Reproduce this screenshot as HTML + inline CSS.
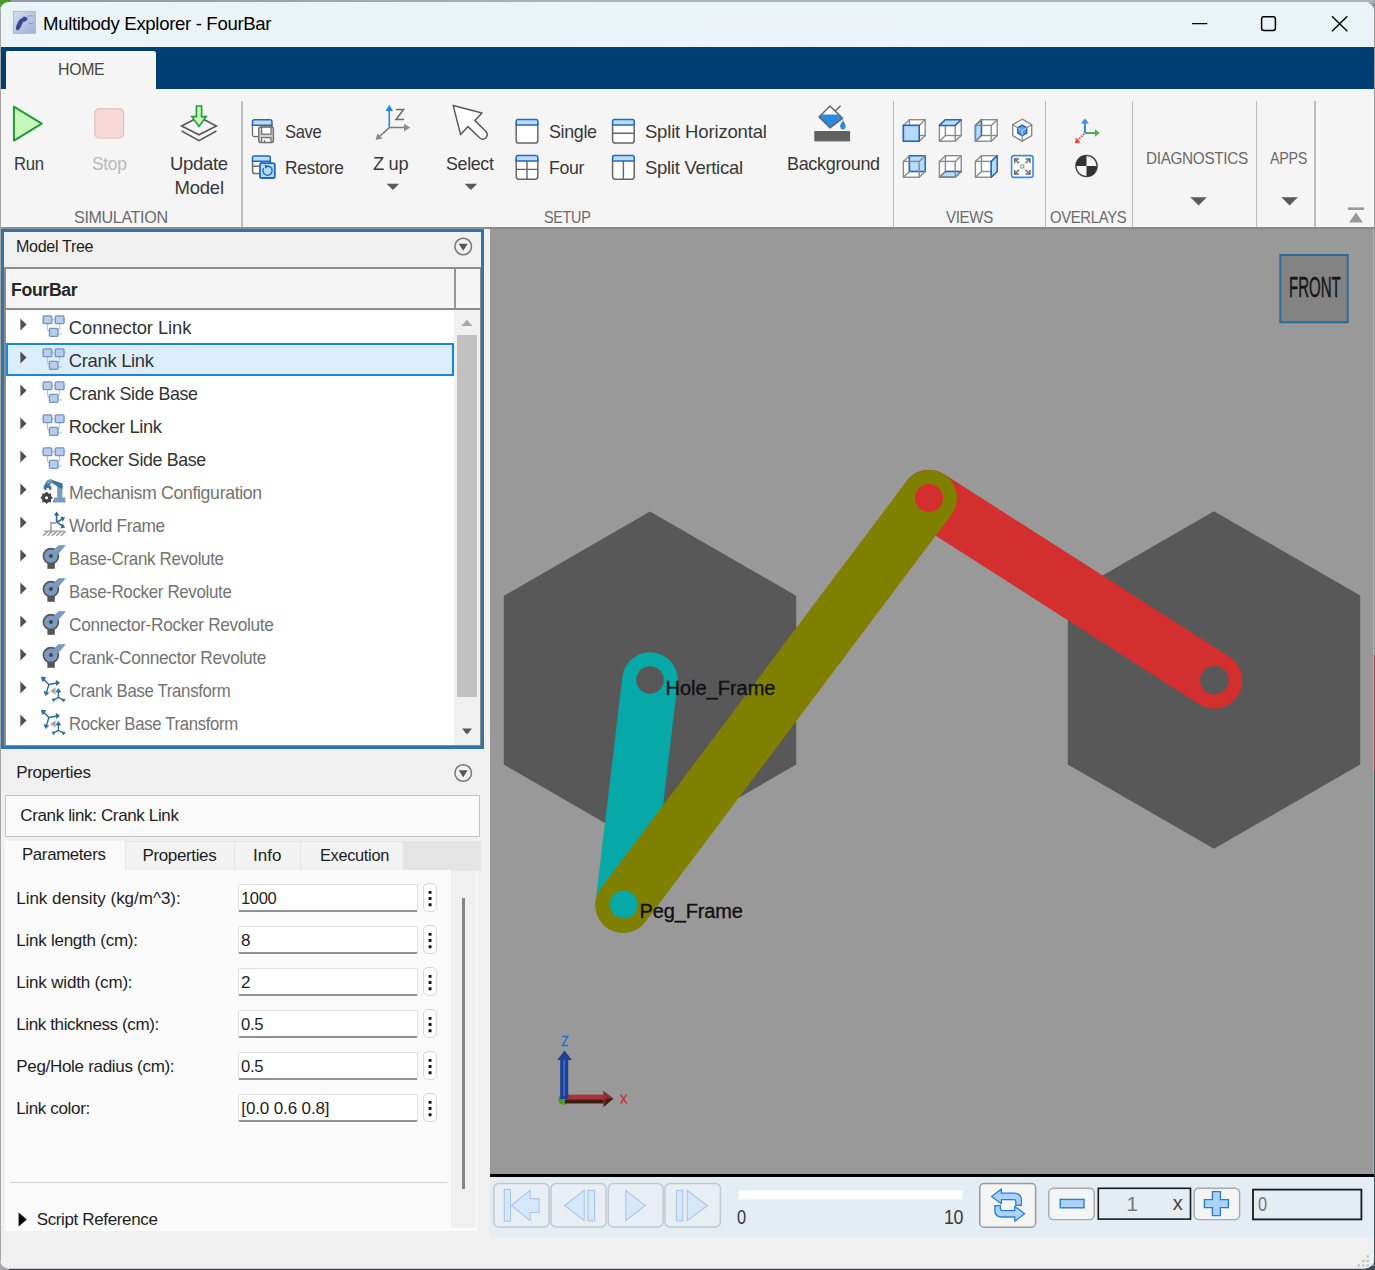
<!DOCTYPE html>
<html><head><meta charset="utf-8"><title>Multibody Explorer - FourBar</title><style>
html,body{margin:0;padding:0}
body{width:1375px;height:1270px;overflow:hidden;position:relative;background:#8b98a3;font-family:"Liberation Sans",sans-serif}
div{position:absolute}
#win{left:0;top:0;width:1375px;height:1270px;clip-path:inset(2px 1px 1.6px 0px round 9px);background:#f0f0f0}
svg{position:absolute;left:0;top:0}
.t{position:absolute;white-space:pre;line-height:1;margin:0}
#front{position:absolute;left:1289.4px;top:272.8px;font-size:29px;line-height:1;color:#161616;-webkit-text-stroke:0.5px #161616;transform-origin:0 0;transform:scaleX(0.517);white-space:pre}

</style></head><body>
<div style="left:0px;top:0px;width:1375px;height:3px;background:linear-gradient(90deg,#8d9aa5 0,#9ba3a9 20%,#b3b3b3 45%,#b3b3b3 100%)"></div>
<div style="left:0px;top:0px;width:11px;height:13px;background:#4b992d"></div>
<div style="left:0px;top:1266px;width:1375px;height:4px;background:#3c484c"></div>
<div style="left:0px;top:1255px;width:9px;height:15px;background:#a8a8a8"></div>
<div style="left:1374px;top:0px;width:1px;height:655px;background:#9a9a9a"></div>
<div style="left:1374px;top:655px;width:1px;height:115px;background:#b04048"></div>
<div style="left:1374px;top:770px;width:1px;height:500px;background:#45575a"></div>
<div id="win">
<div style="left:0px;top:0px;width:1375px;height:47px;background:radial-gradient(ellipse 260px 40px at 800px 44px,#edf2fb 0,#eaf4f7 100%)"></div>
<div style="left:0px;top:47px;width:1375px;height:42px;background:#003f73"></div>
<div style="left:5.4px;top:51.2px;width:150.3px;height:38.8px;background:#f5f5f5;border-radius:2.5px 2.5px 0 0"></div>
<div style="left:0px;top:89px;width:1375px;height:138px;background:#f5f5f5"></div>
<div style="left:0px;top:47px;width:5.5px;height:42px;background:#003f73"></div>
<div style="left:0px;top:227px;width:1375px;height:2px;background:#8c8c8c"></div>
<div style="left:241.3px;top:101px;width:1.3px;height:126px;background:#bdbdbd"></div>
<div style="left:892.8px;top:101px;width:1.3px;height:126px;background:#bdbdbd"></div>
<div style="left:1044.5px;top:101px;width:1.3px;height:126px;background:#bdbdbd"></div>
<div style="left:1131.6px;top:101px;width:1.3px;height:126px;background:#bdbdbd"></div>
<div style="left:1255.8px;top:101px;width:1.3px;height:126px;background:#bdbdbd"></div>
<div style="left:1314.4px;top:101px;width:1.3px;height:126px;background:#bdbdbd"></div>
<div style="left:0px;top:229px;width:1375px;height:1041px;background:#f0f0f0"></div>
<div style="left:1.1px;top:228.6px;width:482.9px;height:520.6px;background:#2e74ad"></div>
<div style="left:4.1px;top:231.6px;width:476.9px;height:35.8px;background:#f0f0f0"></div>
<div style="left:4.1px;top:267.4px;width:476.9px;height:478.6px;background:#8c8c8c"></div>
<div style="left:5.5px;top:269.2px;width:474.5px;height:39.3px;background:#f5f5f5"></div>
<div style="left:454.3px;top:269.2px;width:1.5px;height:39.3px;background:#999"></div>
<div style="left:5.5px;top:310px;width:448.7px;height:434.6px;background:#fff"></div>
<div style="left:454.2px;top:310px;width:25.8px;height:434.6px;background:#f0f0f0"></div>
<div style="left:457.4px;top:335.4px;width:19.4px;height:361.5px;background:#c1c1c1"></div>
<div style="left:6.3px;top:342.6px;width:447.6px;height:33.1px;background:#dceefe;border:2.8px solid #1c84dc;box-sizing:border-box"></div>
<div style="left:4.6px;top:795.3px;width:475.8px;height:41.5px;background:#fafafa;border:1.5px solid #c2c2c2;box-sizing:border-box"></div>
<div style="left:4.6px;top:841px;width:476.4px;height:30px;background:#e4e4e4"></div>
<div style="left:4.6px;top:870px;width:446.4px;height:361px;background:#fafafa"></div>
<div style="left:451px;top:871px;width:25.5px;height:356.5px;background:#f0f0f0"></div>
<div style="left:476px;top:871px;width:1.3px;height:360px;background:#fcfcfc"></div>
<div style="left:4.6px;top:1227.6px;width:472.7px;height:3.4px;background:#fcfcfc"></div>
<div style="left:4.6px;top:841px;width:120.8px;height:31px;background:#fafafa"></div>
<div style="left:126.4px;top:842px;width:107.2px;height:28px;background:#f2f2f2"></div>
<div style="left:234.6px;top:842px;width:65.4px;height:28px;background:#f2f2f2"></div>
<div style="left:301px;top:842px;width:102.4px;height:28px;background:#f2f2f2"></div>
<div style="left:461.9px;top:898px;width:3.0px;height:291px;background:#858585"></div>
<div style="left:10px;top:1182px;width:436.5px;height:1.3px;background:#d2d2d2"></div>
<div style="left:237.7px;top:883.6px;width:180.3px;height:28.6px;background:#fff;border:1px solid #e0e0e0;border-bottom:2px solid #909090;border-radius:2px;box-sizing:border-box"></div>
<div style="left:423.1px;top:883.2px;width:13.9px;height:29.2px;background:#fdfdfd;border:1px solid #d8d8d8;border-radius:5px;box-sizing:border-box"></div>
<div style="left:237.7px;top:925.6px;width:180.3px;height:28.6px;background:#fff;border:1px solid #e0e0e0;border-bottom:2px solid #909090;border-radius:2px;box-sizing:border-box"></div>
<div style="left:423.1px;top:925.2px;width:13.9px;height:29.2px;background:#fdfdfd;border:1px solid #d8d8d8;border-radius:5px;box-sizing:border-box"></div>
<div style="left:237.7px;top:967.6px;width:180.3px;height:28.6px;background:#fff;border:1px solid #e0e0e0;border-bottom:2px solid #909090;border-radius:2px;box-sizing:border-box"></div>
<div style="left:423.1px;top:967.2px;width:13.9px;height:29.2px;background:#fdfdfd;border:1px solid #d8d8d8;border-radius:5px;box-sizing:border-box"></div>
<div style="left:237.7px;top:1009.6px;width:180.3px;height:28.6px;background:#fff;border:1px solid #e0e0e0;border-bottom:2px solid #909090;border-radius:2px;box-sizing:border-box"></div>
<div style="left:423.1px;top:1009.2px;width:13.9px;height:29.2px;background:#fdfdfd;border:1px solid #d8d8d8;border-radius:5px;box-sizing:border-box"></div>
<div style="left:237.7px;top:1051.6px;width:180.3px;height:28.6px;background:#fff;border:1px solid #e0e0e0;border-bottom:2px solid #909090;border-radius:2px;box-sizing:border-box"></div>
<div style="left:423.1px;top:1051.1999999999998px;width:13.9px;height:29.2px;background:#fdfdfd;border:1px solid #d8d8d8;border-radius:5px;box-sizing:border-box"></div>
<div style="left:237.7px;top:1093.6px;width:180.3px;height:28.6px;background:#fff;border:1px solid #e0e0e0;border-bottom:2px solid #909090;border-radius:2px;box-sizing:border-box"></div>
<div style="left:423.1px;top:1093.1999999999998px;width:13.9px;height:29.2px;background:#fdfdfd;border:1px solid #d8d8d8;border-radius:5px;box-sizing:border-box"></div>
<div style="left:490.3px;top:229px;width:884.7px;height:945px;background:#999999"></div>
<div style="left:490.3px;top:227px;width:884.7px;height:2px;background:#8a8a8a"></div>
<div style="left:490.3px;top:1174px;width:884.7px;height:2.6px;background:#000"></div>
<div style="left:490.3px;top:1176.6px;width:884.7px;height:60.0px;background:#e4ecf4"></div>
<div style="left:1372.8px;top:229px;width:1.2px;height:945px;background:#b0b0b0"></div>
<div style="left:0px;top:0px;width:1px;height:1270px;background:#a6a6a6"></div>
<svg width="1375" height="1270" viewBox="0 0 1375 1270">
<defs><linearGradient id="ig" x1="0" y1="0" x2="1" y2="1"><stop offset="0" stop-color="#d4dcee"/><stop offset="1" stop-color="#9fb1d6"/></linearGradient></defs>
<rect x="13.3" y="11.3" width="22" height="22" fill="url(#ig)" stroke="#a9adb9" stroke-width="0.8"/>
<path d="M16 29.5 Q15.5 26 18 22 Q19.5 19 22 18 L24 16.5 L27 17.5 L27.5 19.5 L25 21.5 L23 22 Q21.5 26 19.5 29 Q18 31 16 29.5Z" fill="#3b4891"/>
<path d="M27.5 17.5 L29 15.8 L33 15.8 M28 22.5 L29 23.5 L33 23.5" fill="none" stroke="#7d8db8" stroke-width="0.8"/>
<path d="M1192 23.6 H1207.3" stroke="#000" stroke-width="1.4" fill="none"/>
<rect x="1261.6" y="16.7" width="13.8" height="13.8" rx="2.2" fill="none" stroke="#000" stroke-width="1.5"/>
<path d="M1332 16.2 L1347.3 31.2 M1347.3 16.2 L1332 31.2" stroke="#000" stroke-width="1.4" fill="none"/>
<path d="M13.9 106.7 V140.6 L41.8 123.6 Z" fill="#c7f8ba" stroke="#1f9b37" stroke-width="2" stroke-linejoin="round"/>
<rect x="94.8" y="108.8" width="28.8" height="29.2" rx="4.5" fill="#f9d8d8" stroke="#e0bdb8" stroke-width="1.2"/>
<path d="M181.6 131 L199 140.6 L216.4 131" fill="none" stroke="#5a5a5a" stroke-width="1.6" stroke-linejoin="miter"/>
<path d="M181.6 126 L199 117 L216.4 126 L199 134.8 Z" fill="#f5f5f5" stroke="#5a5a5a" stroke-width="1.6" stroke-linejoin="miter"/>
<path d="M196.4 106 H201.6 V116.6 H206.2 L199 126.4 L191.8 116.6 H196.4 Z" fill="#c7f8ba" stroke="#1f9b37" stroke-width="1.6" stroke-linejoin="miter"/>
<path d="M252.6 124 V135 Q252.6 136.4 254 136.4 H259 M271.8 124 V127" fill="none" stroke="#6b6b6b" stroke-width="1.5"/>
<rect x="253.3" y="124.6" width="17.8" height="11" fill="#fff"/>
<path d="M252.5 125.2 V121.6 Q252.5 119.8 254.3 119.8 H270.1 Q271.9 119.8 271.9 121.6 V125.2 Z" fill="#b9defd" stroke="#2566c0" stroke-width="1.5"/>
<rect x="258.8" y="127" width="14.6" height="15.4" rx="1.8" fill="#d4d4d4" stroke="#727272" stroke-width="1.5"/>
<rect x="261.6" y="127.2" width="9.4" height="7" fill="#fff" stroke="#727272" stroke-width="1.3"/>
<rect x="261.6" y="137.6" width="9.4" height="4.8" fill="#fff" stroke="#727272" stroke-width="1.3"/>
<rect x="263.8" y="140.2" width="1.4" height="2" fill="#727272"/>
<rect x="252.6" y="158" width="17.6" height="15.6" rx="1.8" fill="#fff" stroke="#6b6b6b" stroke-width="1.5"/>
<path d="M252.6 166.2 H262 M261.4 160 V164" stroke="#6b6b6b" stroke-width="1.4" fill="none"/>
<path d="M252.5 161.3 V157.70000000000002 Q252.5 155.9 254.3 155.9 H268.5 Q270.3 155.9 270.3 157.70000000000002 V161.3 Z" fill="#b9defd" stroke="#2566c0" stroke-width="1.5"/>
<rect x="260" y="163.2" width="14.8" height="14.8" rx="1.6" fill="#b5dcfd" stroke="#2566c0" stroke-width="1.8"/>
<path d="M263.6 168.2 A4.6 4.6 0 1 0 267.6 166" fill="none" stroke="#2566c0" stroke-width="1.4"/>
<path d="M264.6 164.6 L268.8 166.2 L265.4 168.8 Z" fill="#2566c0"/>
<path d="M389.3 127.6 V109" stroke="#2b86de" stroke-width="1.6" fill="none"/>
<path d="M385.6 111 L389.3 104.8 L393 111 Z" fill="#2b86de"/>
<path d="M389.3 127.6 H405" stroke="#7a7a7a" stroke-width="1.5" fill="none"/>
<path d="M404 123.8 L410.2 127.6 L404 131.4 Z" fill="#8a8a8a"/>
<path d="M389.3 127.6 L379 137" stroke="#7a7a7a" stroke-width="1.5" fill="none"/>
<path d="M375.6 140 L377.4 133.4 L382.6 138.6 Z" fill="#8a8a8a"/>
<path d="M396 109.4 H403.6 L396 119.6 H404" stroke="#6b6b6b" stroke-width="1.5" fill="none"/>
<path d="M453.2 105.6 L482 113 L474.8 120.4 L486.2 131.8 Q488.6 135.2 485.6 138 Q482.6 140.6 479.6 137.8 L468 126.6 L460.6 134.6 Z" fill="#fff" stroke="#5a5a5a" stroke-width="1.5" stroke-linejoin="round"/>
<path d="M386.6 183.8 H399.2 L392.9 190 Z" fill="#5a5a5a"/>
<path d="M464.6 183.8 H477.2 L470.9 190 Z" fill="#5a5a5a"/>
<path d="M1190.4 197.2 H1206.8 L1198.6 205.6 Z" fill="#5a5a5a"/>
<path d="M1281.4 197.2 H1297.8 L1289.6 205.6 Z" fill="#5a5a5a"/>
<rect x="516.2" y="121.5" width="21.6" height="21.6" rx="2.6" fill="#fff" stroke="#666" stroke-width="1.5"/>
<path d="M516.2 124.9 V121.3 Q516.2 119.5 518.0 119.5 H536.0 Q537.8 119.5 537.8 121.3 V124.9 Z" fill="#b9defd" stroke="#2566c0" stroke-width="1.5"/>
<rect x="516.2" y="157.6" width="21.6" height="21.6" rx="2.6" fill="#fff" stroke="#666" stroke-width="1.5"/>
<path d="M516.2 169.4 H537.8000000000001" stroke="#666" stroke-width="1.4"/>
<path d="M527.0 160.6 V179.2" stroke="#666" stroke-width="1.4"/>
<path d="M516.2 161.0 V157.4 Q516.2 155.6 518.0 155.6 H536.0 Q537.8 155.6 537.8 157.4 V161.0 Z" fill="#b9defd" stroke="#2566c0" stroke-width="1.5"/>
<rect x="612.6" y="121.5" width="21.6" height="21.6" rx="2.6" fill="#fff" stroke="#666" stroke-width="1.5"/>
<path d="M612.6 133.3 H634.2" stroke="#666" stroke-width="1.4"/>
<path d="M612.6 124.9 V121.3 Q612.6 119.5 614.4 119.5 H632.4 Q634.2 119.5 634.2 121.3 V124.9 Z" fill="#b9defd" stroke="#2566c0" stroke-width="1.5"/>
<rect x="612.6" y="157.6" width="21.6" height="21.6" rx="2.6" fill="#fff" stroke="#666" stroke-width="1.5"/>
<path d="M623.4 160.6 V179.2" stroke="#666" stroke-width="1.4"/>
<path d="M612.6 161.0 V157.4 Q612.6 155.6 614.4 155.6 H632.4 Q634.2 155.6 634.2 157.4 V161.0 Z" fill="#b9defd" stroke="#2566c0" stroke-width="1.5"/>
<rect x="814.3" y="131" width="35.8" height="10.4" fill="#616161"/>
<path d="M830 106 L819 117 L830 127.8 L842.6 118.2 Z" fill="#fff"/>
<path d="M821.6 114.4 H838.4 L842.2 118.2 L830 127.6 L819.2 117 Z" fill="#2b8ade"/>
<path d="M830 106 L819 117 L830 127.8 L842.6 118.4 Z" fill="none" stroke="#666" stroke-width="1.5" stroke-linejoin="round"/>
<path d="M835.4 110.8 L840.6 105.8" stroke="#666" stroke-width="1.5"/>
<path d="M842.9 120.6 Q846.2 125 845.6 127 Q845 129.6 842.9 129.6 Q840.6 129.6 840.1 127 Q839.8 125 842.9 120.6Z" fill="#2b8ade"/>
<path d="M903.4 125.4 L909.4 119.7 H925.1999999999999 V135.50000000000003 L919.1999999999999 141.20000000000002 H903.4 Z" fill="#fff"/>
<rect x="909.4" y="119.7" width="15.8" height="15.8" fill="none" stroke="#8a8a8a" stroke-width="1.4"/>
<path d="M903.4 125.4 L909.4 119.7 M919.1999999999999 125.4 L925.1999999999999 119.7 M903.4 141.20000000000002 L909.4 135.50000000000003 M919.1999999999999 141.20000000000002 L925.1999999999999 135.50000000000003" stroke="#8a8a8a" stroke-width="1.4" fill="none"/>
<rect x="903.4" y="125.4" width="15.8" height="15.8" fill="none" stroke="#8a8a8a" stroke-width="1.4"/>
<rect x="903.4" y="125.4" width="15.8" height="15.8" fill="#b5dcfd" stroke="#2566c0" stroke-width="1.6"/>
<path d="M939.4 125.4 L945.4 119.7 H961.1999999999999 V135.50000000000003 L955.1999999999999 141.20000000000002 H939.4 Z" fill="#fff"/>
<rect x="945.4" y="119.7" width="15.8" height="15.8" fill="none" stroke="#8a8a8a" stroke-width="1.4"/>
<path d="M939.4 125.4 L945.4 119.7 M955.1999999999999 125.4 L961.1999999999999 119.7 M939.4 141.20000000000002 L945.4 135.50000000000003 M955.1999999999999 141.20000000000002 L961.1999999999999 135.50000000000003" stroke="#8a8a8a" stroke-width="1.4" fill="none"/>
<rect x="939.4" y="125.4" width="15.8" height="15.8" fill="none" stroke="#8a8a8a" stroke-width="1.4"/>
<path d="M939.4 125.4 L945.4 119.7 H961.1999999999999 L955.1999999999999 125.4 Z" fill="#b5dcfd" stroke="#2566c0" stroke-width="1.5" stroke-linejoin="round"/>
<path d="M975.4 125.4 L981.4 119.7 H997.1999999999999 V135.50000000000003 L991.1999999999999 141.20000000000002 H975.4 Z" fill="#fff"/>
<rect x="981.4" y="119.7" width="15.8" height="15.8" fill="none" stroke="#8a8a8a" stroke-width="1.4"/>
<path d="M975.4 125.4 L981.4 119.7 V135.50000000000003 L975.4 141.20000000000002 Z" fill="#b5dcfd" stroke="#2566c0" stroke-width="1.5" stroke-linejoin="round"/>
<path d="M975.4 125.4 L981.4 119.7 M991.1999999999999 125.4 L997.1999999999999 119.7 M975.4 141.20000000000002 L981.4 135.50000000000003 M991.1999999999999 141.20000000000002 L997.1999999999999 135.50000000000003" stroke="#8a8a8a" stroke-width="1.4" fill="none"/>
<rect x="975.4" y="125.4" width="15.8" height="15.8" fill="none" stroke="#8a8a8a" stroke-width="1.4"/>
<path d="M903.4 161.4 L909.4 155.70000000000002 H925.1999999999999 V171.50000000000003 L919.1999999999999 177.20000000000002 H903.4 Z" fill="#fff"/>
<rect x="909.4" y="155.70000000000002" width="15.8" height="15.8" fill="none" stroke="#8a8a8a" stroke-width="1.4"/>
<rect x="909.4" y="155.70000000000002" width="15.8" height="15.8" fill="#b5dcfd" stroke="#2566c0" stroke-width="1.5" stroke-linejoin="round"/>
<path d="M903.4 161.4 L909.4 155.70000000000002 M919.1999999999999 161.4 L925.1999999999999 155.70000000000002 M903.4 177.20000000000002 L909.4 171.50000000000003 M919.1999999999999 177.20000000000002 L925.1999999999999 171.50000000000003" stroke="#8a8a8a" stroke-width="1.4" fill="none"/>
<rect x="903.4" y="161.4" width="15.8" height="15.8" fill="none" stroke="#8a8a8a" stroke-width="1.4"/>
<path d="M939.4 161.4 L945.4 155.70000000000002 H961.1999999999999 V171.50000000000003 L955.1999999999999 177.20000000000002 H939.4 Z" fill="#fff"/>
<rect x="945.4" y="155.70000000000002" width="15.8" height="15.8" fill="none" stroke="#8a8a8a" stroke-width="1.4"/>
<path d="M939.4 177.20000000000002 L945.4 171.50000000000003 H961.1999999999999 L955.1999999999999 177.20000000000002 Z" fill="#b5dcfd" stroke="#2566c0" stroke-width="1.5" stroke-linejoin="round"/>
<path d="M939.4 161.4 L945.4 155.70000000000002 M955.1999999999999 161.4 L961.1999999999999 155.70000000000002 M939.4 177.20000000000002 L945.4 171.50000000000003 M955.1999999999999 177.20000000000002 L961.1999999999999 171.50000000000003" stroke="#8a8a8a" stroke-width="1.4" fill="none"/>
<rect x="939.4" y="161.4" width="15.8" height="15.8" fill="none" stroke="#8a8a8a" stroke-width="1.4"/>
<path d="M975.4 161.4 L981.4 155.70000000000002 H997.1999999999999 V171.50000000000003 L991.1999999999999 177.20000000000002 H975.4 Z" fill="#fff"/>
<rect x="981.4" y="155.70000000000002" width="15.8" height="15.8" fill="none" stroke="#8a8a8a" stroke-width="1.4"/>
<path d="M975.4 161.4 L981.4 155.70000000000002 M991.1999999999999 161.4 L997.1999999999999 155.70000000000002 M975.4 177.20000000000002 L981.4 171.50000000000003 M991.1999999999999 177.20000000000002 L997.1999999999999 171.50000000000003" stroke="#8a8a8a" stroke-width="1.4" fill="none"/>
<rect x="975.4" y="161.4" width="15.8" height="15.8" fill="none" stroke="#8a8a8a" stroke-width="1.4"/>
<path d="M991.1999999999999 161.4 L997.1999999999999 155.70000000000002 V171.50000000000003 L991.1999999999999 177.20000000000002 Z" fill="#b5dcfd" stroke="#2566c0" stroke-width="1.5" stroke-linejoin="round"/>
<path d="M1022.2 119.2 L1031.7 124.7 L1031.7 135.7 L1022.2 141.2 L1012.7 135.7 L1012.7 124.7 Z" fill="#fff" stroke="#8a8a8a" stroke-width="1.4"/>
<path d="M1022.2 141.2 V135.2 M1031.7 124.7 L1026.8 127.79999999999998 M1012.7 124.7 L1017.6 127.79999999999998" stroke="#8a8a8a" stroke-width="1.2" fill="none"/>
<path d="M1022.2 125.2 L1026.7 127.8 L1026.7 133.0 L1022.2 135.6 L1017.7 133.0 L1017.7 127.8 Z" fill="#5b9be6" stroke="#2566c0" stroke-width="1.5"/>
<path d="M1022.2 130.6 V135.39999999999998 M1022.2 130.6 L1026.7 127.8 M1022.2 130.6 L1017.7 127.8" stroke="#b5dcfd" stroke-width="1" fill="none"/>
<rect x="1011.6" y="155.6" width="21.4" height="21.8" rx="2.4" fill="#fff" stroke="#3a8ee0" stroke-width="1.6"/>
<path d="M1019.0999999999999 163.3 L1014.9 159.1" stroke="#666" stroke-width="1.4"/>
<path d="M1018.9 158.9 H1014.6999999999999 V163.1" stroke="#666" stroke-width="1.5" fill="none"/>
<path d="M1019.0999999999999 169.7 L1014.9 173.9" stroke="#666" stroke-width="1.4"/>
<path d="M1018.9 174.1 H1014.6999999999999 V169.9" stroke="#666" stroke-width="1.5" fill="none"/>
<path d="M1025.5 163.3 L1029.7 159.1" stroke="#666" stroke-width="1.4"/>
<path d="M1025.7 158.9 H1029.8999999999999 V163.1" stroke="#666" stroke-width="1.5" fill="none"/>
<path d="M1025.5 169.7 L1029.7 173.9" stroke="#666" stroke-width="1.4"/>
<path d="M1025.7 174.1 H1029.8999999999999 V169.9" stroke="#666" stroke-width="1.5" fill="none"/>
<rect x="1020.8" y="165.0" width="3" height="3" fill="#fff" stroke="#888" stroke-width="0.9"/>
<path d="M1084.9 133 V121" stroke="#3b8de0" stroke-width="2.2"/><path d="M1080.9 123.4 L1084.9 118.4 L1088.9 123.4 Z" fill="#3b8de0"/>
<path d="M1084.9 133 H1096" stroke="#4db04d" stroke-width="2"/><path d="M1095 129.2 L1099.8 133 L1095 136.8 Z" fill="#4db04d"/>
<path d="M1084.2 133.6 L1078 140" stroke="#f04545" stroke-width="1.8" stroke-dasharray="1.6 1.2"/><path d="M1075 143.6 L1075.8 137.6 L1080.6 142.6 Z" fill="#f04545"/>
<circle cx="1086.5" cy="166" r="10.6" fill="#f5f5f5" stroke="#444" stroke-width="1.4"/>
<path d="M1086.5 166 V155.4 A10.6 10.6 0 0 0 1075.9 166 Z M1086.5 166 V176.6 A10.6 10.6 0 0 0 1097.1 166 Z" fill="#333"/>
<rect x="1348" y="207.4" width="16" height="2.6" fill="#9a9a9a"/><path d="M1349 222.6 L1356 212.4 L1363 222.6 Z" fill="#9a9a9a"/>
<circle cx="463.2" cy="246.5" r="8.3" fill="none" stroke="#777" stroke-width="1.5"/>
<path d="M458.7 243.8 H467.7 L463.2 250.7 Z" fill="#555"/>
<circle cx="463.2" cy="773" r="8.3" fill="none" stroke="#777" stroke-width="1.5"/>
<path d="M458.7 770.3 H467.7 L463.2 777.2 Z" fill="#555"/>
<path d="M20.4 318.5 L26.5 324.5 L20.4 330.5 Z" fill="#4f4f4f"/>
<path d="M41.6 319.8 H65.6 M47.4 323.7 V329.09999999999997 Q47.4 331.09999999999997 49.4 331.09999999999997 M59.6 323.7 V327.7 Q59.6 329.7 58 330.3 M58 333.9 H62" stroke="#a9c0e0" stroke-width="1" fill="none"/>
<rect x="43.2" y="315.9" width="8.6" height="7.8" rx="1" fill="#b9cde9" stroke="#6e93c4" stroke-width="1.3"/>
<rect x="55.2" y="315.9" width="8.8" height="7.8" rx="1" fill="#b9cde9" stroke="#6e93c4" stroke-width="1.3"/>
<rect x="49.4" y="328.3" width="8.6" height="8.0" rx="1" fill="#b9cde9" stroke="#6e93c4" stroke-width="1.3"/>
<path d="M20.4 351.5 L26.5 357.5 L20.4 363.5 Z" fill="#4f4f4f"/>
<path d="M41.6 352.8 H65.6 M47.4 356.7 V362.09999999999997 Q47.4 364.09999999999997 49.4 364.09999999999997 M59.6 356.7 V360.7 Q59.6 362.7 58 363.3 M58 366.9 H62" stroke="#a9c0e0" stroke-width="1" fill="none"/>
<rect x="43.2" y="348.9" width="8.6" height="7.8" rx="1" fill="#b9cde9" stroke="#6e93c4" stroke-width="1.3"/>
<rect x="55.2" y="348.9" width="8.8" height="7.8" rx="1" fill="#b9cde9" stroke="#6e93c4" stroke-width="1.3"/>
<rect x="49.4" y="361.3" width="8.6" height="8.0" rx="1" fill="#b9cde9" stroke="#6e93c4" stroke-width="1.3"/>
<path d="M20.4 384.5 L26.5 390.5 L20.4 396.5 Z" fill="#4f4f4f"/>
<path d="M41.6 385.8 H65.6 M47.4 389.7 V395.09999999999997 Q47.4 397.09999999999997 49.4 397.09999999999997 M59.6 389.7 V393.7 Q59.6 395.7 58 396.3 M58 399.9 H62" stroke="#a9c0e0" stroke-width="1" fill="none"/>
<rect x="43.2" y="381.9" width="8.6" height="7.8" rx="1" fill="#b9cde9" stroke="#6e93c4" stroke-width="1.3"/>
<rect x="55.2" y="381.9" width="8.8" height="7.8" rx="1" fill="#b9cde9" stroke="#6e93c4" stroke-width="1.3"/>
<rect x="49.4" y="394.3" width="8.6" height="8.0" rx="1" fill="#b9cde9" stroke="#6e93c4" stroke-width="1.3"/>
<path d="M20.4 417.5 L26.5 423.5 L20.4 429.5 Z" fill="#4f4f4f"/>
<path d="M41.6 418.8 H65.6 M47.4 422.7 V428.09999999999997 Q47.4 430.09999999999997 49.4 430.09999999999997 M59.6 422.7 V426.7 Q59.6 428.7 58 429.3 M58 432.9 H62" stroke="#a9c0e0" stroke-width="1" fill="none"/>
<rect x="43.2" y="414.9" width="8.6" height="7.8" rx="1" fill="#b9cde9" stroke="#6e93c4" stroke-width="1.3"/>
<rect x="55.2" y="414.9" width="8.8" height="7.8" rx="1" fill="#b9cde9" stroke="#6e93c4" stroke-width="1.3"/>
<rect x="49.4" y="427.3" width="8.6" height="8.0" rx="1" fill="#b9cde9" stroke="#6e93c4" stroke-width="1.3"/>
<path d="M20.4 450.5 L26.5 456.5 L20.4 462.5 Z" fill="#4f4f4f"/>
<path d="M41.6 451.8 H65.6 M47.4 455.7 V461.09999999999997 Q47.4 463.09999999999997 49.4 463.09999999999997 M59.6 455.7 V459.7 Q59.6 461.7 58 462.3 M58 465.9 H62" stroke="#a9c0e0" stroke-width="1" fill="none"/>
<rect x="43.2" y="447.9" width="8.6" height="7.8" rx="1" fill="#b9cde9" stroke="#6e93c4" stroke-width="1.3"/>
<rect x="55.2" y="447.9" width="8.8" height="7.8" rx="1" fill="#b9cde9" stroke="#6e93c4" stroke-width="1.3"/>
<rect x="49.4" y="460.3" width="8.6" height="8.0" rx="1" fill="#b9cde9" stroke="#6e93c4" stroke-width="1.3"/>
<path d="M20.4 483.5 L26.5 489.5 L20.4 495.5 Z" fill="#4f4f4f"/>
<path d="M52.4 502.6 L54.4 497.4 H57.2 V486.0 H62.4 V497.4 H65.4 V502.6 Z" fill="#7a9bbf"/>
<path d="M62.6 489.0 L62.6 483.4 L50.4 479.2 L47 480.4 L43.6 486.6 L44 489.4 L46 490.2 L47 488.0 L48.6 488.0 L49.6 490.2 L51.4 489.4 L51.6 486.8 L49.6 485.4 L51.8 482.8 L57.2 486.6 Z" fill="#2d6a96" opacity="0.92"/>
<path d="M47.6 480.6 L50.4 479.4 L52.6 480.2 L50 484.6 L46.4 483.4Z" fill="#7a9bbf"/>
<path d="M52.0 497.8 L50.3 499.3 L50.4 501.6 L48.1 501.5 L46.6 503.2 L45.1 501.5 L42.8 501.6 L42.9 499.3 L41.2 497.8 L42.9 496.3 L42.8 494.0 L45.1 494.1 L46.6 492.4 L48.1 494.1 L50.4 494.0 L50.3 496.3 Z" fill="#444" stroke="#444" stroke-width="1.2" stroke-linejoin="round"/>
<circle cx="46.6" cy="497.8" r="1.5" fill="#fff"/>
<path d="M20.4 516.5 L26.5 522.5 L20.4 528.5 Z" fill="#4f4f4f"/>
<path d="M44 531.2 H64.6" stroke="#9a9a9a" stroke-width="1.3"/>
<path d="M48.0 531.4 L43.0 535.8" stroke="#9a9a9a" stroke-width="1.4"/>
<path d="M52.4 531.4 L47.4 535.8" stroke="#9a9a9a" stroke-width="1.4"/>
<path d="M56.800000000000004 531.4 L51.800000000000004 535.8" stroke="#9a9a9a" stroke-width="1.4"/>
<path d="M61.2 531.4 L56.2 535.8" stroke="#9a9a9a" stroke-width="1.4"/>
<path d="M65.60000000000001 531.4 L60.6 535.8" stroke="#9a9a9a" stroke-width="1.4"/>
<path d="M50.9 531.0 V523.0 H56" stroke="#8a8a8a" stroke-width="1.3" fill="none"/>
<path d="M56.6 522.2 V514.4 M56.6 522.2 L63 518.8 M56.6 522.2 L63 526.4" stroke="#2d6a96" stroke-width="1.6" fill="none"/>
<path d="M53.800000000000004 515.6 L56.6 511.6 L59.4 515.6 Z M60.4 516.6 L65.2 517.6 L62.6 521.6 Z M62.6 523.4 L65.2 527.6 L60.4 528.4 Z" fill="#2d6a96"/>
<path d="M20.4 549.5 L26.5 555.5 L20.4 561.5 Z" fill="#4f4f4f"/>
<rect x="47.4" y="563.0" width="7.4" height="5.8" fill="#555"/>
<path d="M53 551.0 L58.4 545.6 L65.6 545.2 L58.6 553.6 Z" fill="#7a9bbf"/>
<circle cx="50.9" cy="556.1" r="7.5" fill="#7a9bbf" stroke="#555" stroke-width="1.7"/>
<path d="M53 551.0 L58.4 545.6 L65.6 545.2 L58.6 553.6 L55 556.0 Z" fill="#7a9bbf"/>
<circle cx="50.9" cy="556.1" r="2" fill="#444"/>
<path d="M20.4 582.5 L26.5 588.5 L20.4 594.5 Z" fill="#4f4f4f"/>
<rect x="47.4" y="596.0" width="7.4" height="5.8" fill="#555"/>
<path d="M53 584.0 L58.4 578.6 L65.6 578.2 L58.6 586.6 Z" fill="#7a9bbf"/>
<circle cx="50.9" cy="589.1" r="7.5" fill="#7a9bbf" stroke="#555" stroke-width="1.7"/>
<path d="M53 584.0 L58.4 578.6 L65.6 578.2 L58.6 586.6 L55 589.0 Z" fill="#7a9bbf"/>
<circle cx="50.9" cy="589.1" r="2" fill="#444"/>
<path d="M20.4 615.5 L26.5 621.5 L20.4 627.5 Z" fill="#4f4f4f"/>
<rect x="47.4" y="629.0" width="7.4" height="5.8" fill="#555"/>
<path d="M53 617.0 L58.4 611.6 L65.6 611.2 L58.6 619.6 Z" fill="#7a9bbf"/>
<circle cx="50.9" cy="622.1" r="7.5" fill="#7a9bbf" stroke="#555" stroke-width="1.7"/>
<path d="M53 617.0 L58.4 611.6 L65.6 611.2 L58.6 619.6 L55 622.0 Z" fill="#7a9bbf"/>
<circle cx="50.9" cy="622.1" r="2" fill="#444"/>
<path d="M20.4 648.5 L26.5 654.5 L20.4 660.5 Z" fill="#4f4f4f"/>
<rect x="47.4" y="662.0" width="7.4" height="5.8" fill="#555"/>
<path d="M53 650.0 L58.4 644.6 L65.6 644.2 L58.6 652.6 Z" fill="#7a9bbf"/>
<circle cx="50.9" cy="655.1" r="7.5" fill="#7a9bbf" stroke="#555" stroke-width="1.7"/>
<path d="M53 650.0 L58.4 644.6 L65.6 644.2 L58.6 652.6 L55 655.0 Z" fill="#7a9bbf"/>
<circle cx="50.9" cy="655.1" r="2" fill="#444"/>
<path d="M20.4 681.5 L26.5 687.5 L20.4 693.5 Z" fill="#4f4f4f"/>
<path d="M48.9 684.5 L43.4 679.0 M48.9 684.5 L57 683.0 M48.9 684.5 L46.4 692.6" stroke="#2d6a96" stroke-width="1.4" fill="none"/>
<path d="M41.4 677.0 L45.8 677.6 L42.6 681.6 Z M56.2 680.6 L59.4 682.6 L56.6 685.4 Z M44 691.6 L48.6 692.8 L45.8 695.6 Z" fill="#2d6a96" stroke="#2d6a96" stroke-width="0.8" stroke-linejoin="round"/>
<path d="M50 691.0 L55.6 687.2 V694.8 Z" fill="#aaa"/>
<path d="M58.4 697.3 V691.4 M58.4 697.3 L53.6 700.0 M58.4 697.3 L63.4 700.0" stroke="#2d6a96" stroke-width="1.4" fill="none"/>
<path d="M56.2 692.0 L58.4 688.6 L60.6 692.0 Z M52 699.0 L55 699.0 L53.6 701.6 Z M62 699.0 L65.2 699.4 L63.4 701.8Z" fill="#2d6a96" stroke="#2d6a96" stroke-width="0.8" stroke-linejoin="round"/>
<path d="M20.4 714.5 L26.5 720.5 L20.4 726.5 Z" fill="#4f4f4f"/>
<path d="M48.9 717.5 L43.4 712.0 M48.9 717.5 L57 716.0 M48.9 717.5 L46.4 725.6" stroke="#2d6a96" stroke-width="1.4" fill="none"/>
<path d="M41.4 710.0 L45.8 710.6 L42.6 714.6 Z M56.2 713.6 L59.4 715.6 L56.6 718.4 Z M44 724.6 L48.6 725.8 L45.8 728.6 Z" fill="#2d6a96" stroke="#2d6a96" stroke-width="0.8" stroke-linejoin="round"/>
<path d="M50 724.0 L55.6 720.2 V727.8 Z" fill="#aaa"/>
<path d="M58.4 730.3 V724.4 M58.4 730.3 L53.6 733.0 M58.4 730.3 L63.4 733.0" stroke="#2d6a96" stroke-width="1.4" fill="none"/>
<path d="M56.2 725.0 L58.4 721.6 L60.6 725.0 Z M52 732.0 L55 732.0 L53.6 734.6 Z M62 732.0 L65.2 732.4 L63.4 734.8Z" fill="#2d6a96" stroke="#2d6a96" stroke-width="0.8" stroke-linejoin="round"/>
<path d="M461.4 326 L466.9 319.8 L472.4 326 Z" fill="#a8a8a8"/>
<path d="M462 728.4 H472 L467 734.4 Z" fill="#555"/>
<rect x="428.6" y="890.9" width="2.9" height="2.9" rx="0.5" fill="#111"/>
<rect x="428.6" y="897.1" width="2.9" height="2.9" rx="0.5" fill="#111"/>
<rect x="428.6" y="903.3" width="2.9" height="2.9" rx="0.5" fill="#111"/>
<rect x="428.6" y="932.9" width="2.9" height="2.9" rx="0.5" fill="#111"/>
<rect x="428.6" y="939.1" width="2.9" height="2.9" rx="0.5" fill="#111"/>
<rect x="428.6" y="945.3" width="2.9" height="2.9" rx="0.5" fill="#111"/>
<rect x="428.6" y="974.9" width="2.9" height="2.9" rx="0.5" fill="#111"/>
<rect x="428.6" y="981.1" width="2.9" height="2.9" rx="0.5" fill="#111"/>
<rect x="428.6" y="987.3" width="2.9" height="2.9" rx="0.5" fill="#111"/>
<rect x="428.6" y="1016.9" width="2.9" height="2.9" rx="0.5" fill="#111"/>
<rect x="428.6" y="1023.1" width="2.9" height="2.9" rx="0.5" fill="#111"/>
<rect x="428.6" y="1029.3" width="2.9" height="2.9" rx="0.5" fill="#111"/>
<rect x="428.6" y="1058.9" width="2.9" height="2.9" rx="0.5" fill="#111"/>
<rect x="428.6" y="1065.1" width="2.9" height="2.9" rx="0.5" fill="#111"/>
<rect x="428.6" y="1071.3" width="2.9" height="2.9" rx="0.5" fill="#111"/>
<rect x="428.6" y="1100.9" width="2.9" height="2.9" rx="0.5" fill="#111"/>
<rect x="428.6" y="1107.1" width="2.9" height="2.9" rx="0.5" fill="#111"/>
<rect x="428.6" y="1113.3" width="2.9" height="2.9" rx="0.5" fill="#111"/>
<path d="M18.6 1212.4 L26.8 1219.4 L18.6 1226.4 Z" fill="#000"/>
<path d="M650.0 511.4 L796.2 595.8 L796.2 764.6 L650.0 849.0 L503.8 764.6 L503.8 595.8 Z" fill="#585858"/>
<path d="M1214.0 511.2 L1360.2 595.6 L1360.2 764.4 L1214.0 848.8 L1067.8 764.4 L1067.8 595.6 Z" fill="#585858"/>
<line x1="650" y1="680" x2="623.2" y2="905" stroke="#06a8a8" stroke-width="55.6" stroke-linecap="round"/>
<circle cx="650" cy="680" r="13.8" fill="#585858"/>
<line x1="929" y1="497.9" x2="1214.2" y2="680.5" stroke="#d32f2f" stroke-width="56.4" stroke-linecap="round"/>
<circle cx="1214.4" cy="680.2" r="14.3" fill="#585858"/>
<line x1="623.2" y1="905" x2="929" y2="497.9" stroke="#808000" stroke-width="56" stroke-linecap="round"/>
<circle cx="929" cy="498" r="14.1" fill="#d32f2f"/>
<circle cx="623.8" cy="904.5" r="13.9" fill="#06a8a8"/>
<rect x="1280.3" y="255" width="67.4" height="67.2" fill="#838383" stroke="#266c9a" stroke-width="2"/>
<circle cx="563.4" cy="1099.6" r="5.2" fill="#4a9a2a"/>
<rect x="565" y="1094.6" width="40" height="8.6" fill="#a83238"/>
<rect x="565" y="1099.6" width="40" height="3.8" fill="#3a1c10"/>
<path d="M603.4 1090.8 L613.4 1098.6 L603.4 1107 Z" fill="#8c3036"/><path d="M606 1098.6 L613.4 1098.6 L603.4 1107 Z" fill="#3a2010"/>
<rect x="560.2" y="1058" width="8" height="41" fill="#1f3f96"/>
<rect x="563.4" y="1058" width="1.6" height="38" fill="#3a74d0"/>
<path d="M557.4 1060 L564.4 1050.4 L572 1060 Z" fill="#1f3f96"/>
<path d="M562.2 1036.4 H567.8 L562.4 1045.6 H568" stroke="#2a6fd0" stroke-width="1.5" fill="none"/>
<path d="M620.6 1094.6 L626.6 1103.6 M626.6 1094.6 L620.6 1103.6" stroke="#c83038" stroke-width="1.5" fill="none"/>
<rect x="493.8" y="1183.6" width="55.2" height="43.4" rx="5" fill="#e8eef3" stroke="#c4c9d0" stroke-width="1.5"/>
<rect x="551" y="1183.6" width="55.0" height="43.4" rx="5" fill="#e8eef3" stroke="#c4c9d0" stroke-width="1.5"/>
<rect x="608.3" y="1183.6" width="54.8" height="43.4" rx="5" fill="#e8eef3" stroke="#c4c9d0" stroke-width="1.5"/>
<rect x="665" y="1183.6" width="55.4" height="43.4" rx="5" fill="#e8eef3" stroke="#c4c9d0" stroke-width="1.5"/>
<rect x="504.3" y="1189.4" width="6.2" height="31.8" fill="#d5e7f8" stroke="#a9c8ea" stroke-width="1.1"/>
<path d="M511.4 1205.5 L530.1 1190.4 V1198.6 H539.2 V1212.5 H530.1 V1220.7 Z" fill="#d5e7f8" stroke="#a9c8ea" stroke-width="1.1"/>
<path d="M564.7 1205.5 L584.2 1190.4 V1220.7 Z" fill="#d5e7f8" stroke="#a9c8ea" stroke-width="1.1"/><rect x="588" y="1190.4" width="6.6" height="30.4" fill="#d5e7f8" stroke="#a9c8ea" stroke-width="1.1"/>
<path d="M625.8 1190.4 L645.3 1205.5 L625.8 1220.7 Z" fill="#d5e7f8" stroke="#a9c8ea" stroke-width="1.1"/>
<rect x="676.4" y="1190.4" width="6.4" height="30.4" fill="#d5e7f8" stroke="#a9c8ea" stroke-width="1.1"/><path d="M687.2 1190.4 L707.3 1205.5 L687.2 1220.7 Z" fill="#d5e7f8" stroke="#a9c8ea" stroke-width="1.1"/>
<rect x="738.7" y="1190.4" width="223.8" height="9" fill="#fff"/>
<rect x="979.8" y="1183.6" width="55.8" height="43.6" rx="4" fill="#f5f5f5" stroke="#9a9a9a" stroke-width="1.5"/>
<path d="M991.6 1196.4 L1001.4 1189 V1193.2 H1014 Q1021.4 1193.2 1021.4 1200 V1205.4 H1015.8 V1201.4 Q1015.8 1199.6 1014 1199.6 H1001.4 V1203.8 Z" fill="#a9d3fb" stroke="#2b7dd4" stroke-width="1.3" stroke-linejoin="round"/>
<path d="M1024.6 1213.8 L1014.8 1221.2 V1217 H1002.2 Q994.8 1217 994.8 1210.2 V1205.6 H1000.4 V1208.8 Q1000.4 1210.6 1002.2 1210.6 H1014.8 V1206.4 Z" fill="#a9d3fb" stroke="#2b7dd4" stroke-width="1.3" stroke-linejoin="round"/>
<rect x="1048.8" y="1188.2" width="45.4" height="31.4" rx="4.5" fill="#f5f5f5" stroke="#a8a8a8" stroke-width="1.4"/>
<rect x="1194.2" y="1188.2" width="45.4" height="31.4" rx="4.5" fill="#f5f5f5" stroke="#a8a8a8" stroke-width="1.4"/>
<rect x="1060.2" y="1199.4" width="23.8" height="8.4" fill="#a9d3fb" stroke="#2b7dd4" stroke-width="1.4"/>
<path d="M1212.4 1191.6 H1220.4 V1199.6 H1228.4 V1207.6 H1220.4 V1215.6 H1212.4 V1207.6 H1204.4 V1199.6 H1212.4 Z" fill="#a9d3fb" stroke="#2b7dd4" stroke-width="1.4"/>
<rect x="1098.3" y="1188.3" width="92.2" height="30.8" fill="#e4ecf4" stroke="#1a1a1a" stroke-width="1.6"/>
<rect x="1253" y="1189.6" width="108.4" height="29.8" fill="#e4ecf4" stroke="#1a1a1a" stroke-width="1.8"/>
<rect x="1366.5" y="1255.2" width="2.3" height="2.3" fill="#bfbfbf"/>
<rect x="1362.1000000000001" y="1259.8000000000002" width="2.3" height="2.3" fill="#bfbfbf"/>
<rect x="1366.5" y="1259.8000000000002" width="2.3" height="2.3" fill="#bfbfbf"/>
<rect x="1357.5" y="1264.3000000000002" width="2.3" height="2.3" fill="#bfbfbf"/>
<rect x="1362.1000000000001" y="1264.3000000000002" width="2.3" height="2.3" fill="#bfbfbf"/>
<rect x="1366.5" y="1264.3000000000002" width="2.3" height="2.3" fill="#bfbfbf"/>
</svg>
<span class="t" style="left:43px;top:13.92px;font-size:19px;color:#000;letter-spacing:-0.350px;transform:scaleX(0.9789);transform-origin:0 0;">Multibody Explorer - FourBar</span>
<span class="t" style="left:57.8px;top:61.01px;font-size:17px;color:#444;letter-spacing:-0.350px;transform:scaleX(0.9329);transform-origin:0 0;">HOME</span>
<span class="t" style="left:13.5px;top:154.84px;font-size:18.5px;color:#383838;letter-spacing:-0.350px;transform:scaleX(0.9022);transform-origin:0 0;">Run</span>
<span class="t" style="left:91.5px;top:154.84px;font-size:18.5px;color:#b9b9b9;letter-spacing:-0.350px;transform:scaleX(0.9429);transform-origin:0 0;">Stop</span>
<span class="t" style="left:170px;top:154.84px;font-size:18.5px;color:#383838;letter-spacing:-0.331px;">Update</span>
<span class="t" style="left:174.6px;top:178.84px;font-size:18.5px;color:#383838;letter-spacing:-0.248px;">Model</span>
<span class="t" style="left:284.8px;top:123.14px;font-size:18.5px;color:#383838;letter-spacing:-0.350px;transform:scaleX(0.8925);transform-origin:0 0;">Save</span>
<span class="t" style="left:285px;top:158.84px;font-size:18.5px;color:#383838;letter-spacing:-0.350px;transform:scaleX(0.9397);transform-origin:0 0;">Restore</span>
<span class="t" style="left:373.4px;top:154.84px;font-size:18.5px;color:#383838;letter-spacing:-0.350px;transform:scaleX(0.9894);transform-origin:0 0;">Z up</span>
<span class="t" style="left:445.7px;top:154.84px;font-size:18.5px;color:#383838;letter-spacing:-0.350px;transform:scaleX(0.9643);transform-origin:0 0;">Select</span>
<span class="t" style="left:548.6px;top:123.14px;font-size:18.5px;color:#383838;letter-spacing:-0.350px;transform:scaleX(0.9660);transform-origin:0 0;">Single</span>
<span class="t" style="left:549px;top:158.84px;font-size:18.5px;color:#383838;letter-spacing:-0.350px;transform:scaleX(0.9568);transform-origin:0 0;">Four</span>
<span class="t" style="left:644.9px;top:123.14px;font-size:18.5px;color:#383838;letter-spacing:-0.155px;">Split Horizontal</span>
<span class="t" style="left:645px;top:158.84px;font-size:18.5px;color:#383838;letter-spacing:-0.292px;">Split Vertical</span>
<span class="t" style="left:786.5px;top:154.84px;font-size:18.5px;color:#383838;letter-spacing:-0.350px;transform:scaleX(0.9740);transform-origin:0 0;">Background</span>
<span class="t" style="left:74px;top:208.53px;font-size:16.5px;color:#6a6a6a;letter-spacing:-0.350px;transform:scaleX(0.9743);transform-origin:0 0;">SIMULATION</span>
<span class="t" style="left:544px;top:208.53px;font-size:16.5px;color:#6a6a6a;letter-spacing:-0.350px;transform:scaleX(0.8729);transform-origin:0 0;">SETUP</span>
<span class="t" style="left:945.5px;top:208.53px;font-size:16.5px;color:#6a6a6a;letter-spacing:-0.350px;transform:scaleX(0.9114);transform-origin:0 0;">VIEWS</span>
<span class="t" style="left:1050px;top:208.53px;font-size:16.5px;color:#6a6a6a;letter-spacing:-0.350px;transform:scaleX(0.8982);transform-origin:0 0;">OVERLAYS</span>
<span class="t" style="left:1145.7px;top:149.83px;font-size:16.5px;color:#6a6a6a;letter-spacing:-0.350px;transform:scaleX(0.9275);transform-origin:0 0;">DIAGNOSTICS</span>
<span class="t" style="left:1269.9px;top:149.83px;font-size:16.5px;color:#6a6a6a;letter-spacing:-0.350px;transform:scaleX(0.8701);transform-origin:0 0;">APPS</span>
<span class="t" style="left:16.2px;top:238.21px;font-size:17px;color:#1e1e1e;letter-spacing:-0.350px;transform:scaleX(0.9463);transform-origin:0 0;">Model Tree</span>
<span class="t" style="left:10.5px;top:280.66px;font-size:18px;color:#262626;font-weight:700;letter-spacing:-0.350px;transform:scaleX(0.9821);transform-origin:0 0;">FourBar</span>
<span class="t" style="left:16.2px;top:764.41px;font-size:17px;color:#1e1e1e;letter-spacing:-0.309px;">Properties</span>
<span class="t" style="left:20.3px;top:806.81px;font-size:17px;color:#1e1e1e;letter-spacing:-0.366px;">Crank link: Crank Link</span>
<span class="t" style="left:22px;top:846.01px;font-size:17px;color:#1e1e1e;letter-spacing:-0.350px;transform:scaleX(0.9891);transform-origin:0 0;">Parameters</span>
<span class="t" style="left:142.5px;top:846.61px;font-size:17px;color:#1e1e1e;letter-spacing:-0.365px;">Properties</span>
<span class="t" style="left:253px;top:846.61px;font-size:17px;color:#1e1e1e;letter-spacing:0.047px;">Info</span>
<span class="t" style="left:319.7px;top:846.61px;font-size:17px;color:#1e1e1e;letter-spacing:-0.350px;transform:scaleX(0.9642);transform-origin:0 0;">Execution</span>
<span class="t" style="left:36.7px;top:1211.11px;font-size:17px;color:#1e1e1e;letter-spacing:-0.362px;">Script Reference</span>
<span class="t" style="left:736.94px;top:1205.62px;font-size:21px;color:#3a3a3a;transform:scaleX(0.7800);transform-origin:0 0;">0</span>
<span class="t" style="left:944px;top:1205.62px;font-size:21px;color:#3a3a3a;letter-spacing:-0.350px;transform:scaleX(0.8475);transform-origin:0 0;">10</span>
<span class="t" style="left:1126.6px;top:1194.05px;font-size:20.5px;color:#777;">1</span>
<span class="t" style="left:1172.65px;top:1192.87px;font-size:20px;color:#444;">x</span>
<span class="t" style="left:1257.64px;top:1194.05px;font-size:20.5px;color:#777;transform:scaleX(0.8000);transform-origin:0 0;">0</span>
<span class="t" style="left:665.5px;top:677.87px;font-size:20px;color:#111;-webkit-text-stroke:0.35px #111;letter-spacing:-0.016px;">Hole_Frame</span>
<span class="t" style="left:639.5px;top:901.37px;font-size:20px;color:#111;-webkit-text-stroke:0.35px #111;letter-spacing:-0.125px;">Peg_Frame</span>
<span class="t" style="left:68.8px;top:318.72px;font-size:18.4px;color:#333;letter-spacing:-0.085px;">Connector Link</span>
<span class="t" style="left:68.8px;top:351.72px;font-size:18.4px;color:#333;letter-spacing:-0.301px;">Crank Link</span>
<span class="t" style="left:68.8px;top:384.72px;font-size:18.4px;color:#333;letter-spacing:-0.350px;transform:scaleX(0.9691);transform-origin:0 0;">Crank Side Base</span>
<span class="t" style="left:68.8px;top:417.72px;font-size:18.4px;color:#333;letter-spacing:-0.391px;">Rocker Link</span>
<span class="t" style="left:68.8px;top:450.72px;font-size:18.4px;color:#333;letter-spacing:-0.350px;transform:scaleX(0.9665);transform-origin:0 0;">Rocker Side Base</span>
<span class="t" style="left:68.8px;top:483.72px;font-size:18.4px;color:#737373;letter-spacing:-0.350px;transform:scaleX(0.9620);transform-origin:0 0;">Mechanism Configuration</span>
<span class="t" style="left:68.8px;top:516.72px;font-size:18.4px;color:#737373;letter-spacing:-0.350px;transform:scaleX(0.9391);transform-origin:0 0;">World Frame</span>
<span class="t" style="left:68.8px;top:549.72px;font-size:18.4px;color:#737373;letter-spacing:-0.350px;transform:scaleX(0.9199);transform-origin:0 0;">Base-Crank Revolute</span>
<span class="t" style="left:68.8px;top:582.72px;font-size:18.4px;color:#737373;letter-spacing:-0.350px;transform:scaleX(0.9180);transform-origin:0 0;">Base-Rocker Revolute</span>
<span class="t" style="left:68.8px;top:615.72px;font-size:18.4px;color:#737373;letter-spacing:-0.350px;transform:scaleX(0.9377);transform-origin:0 0;">Connector-Rocker Revolute</span>
<span class="t" style="left:68.8px;top:648.72px;font-size:18.4px;color:#737373;letter-spacing:-0.350px;transform:scaleX(0.9414);transform-origin:0 0;">Crank-Connector Revolute</span>
<span class="t" style="left:68.8px;top:681.72px;font-size:18.4px;color:#737373;letter-spacing:-0.350px;transform:scaleX(0.9125);transform-origin:0 0;">Crank Base Transform</span>
<span class="t" style="left:68.8px;top:714.72px;font-size:18.4px;color:#737373;letter-spacing:-0.350px;transform:scaleX(0.9088);transform-origin:0 0;">Rocker Base Transform</span>
<span class="t" style="left:16.2px;top:889.51px;font-size:17px;color:#1e1e1e;letter-spacing:-0.015px;">Link density (kg/m^3):</span>
<span class="t" style="left:241.3px;top:889.51px;font-size:17px;color:#1e1e1e;letter-spacing:-0.350px;transform:scaleX(0.9707);transform-origin:0 0;">1000</span>
<span class="t" style="left:16.2px;top:931.51px;font-size:17px;color:#1e1e1e;letter-spacing:-0.242px;">Link length (cm):</span>
<span class="t" style="left:240.92px;top:931.51px;font-size:17px;color:#1e1e1e;">8</span>
<span class="t" style="left:16.2px;top:973.51px;font-size:17px;color:#1e1e1e;letter-spacing:-0.175px;">Link width (cm):</span>
<span class="t" style="left:240.92px;top:973.51px;font-size:17px;color:#1e1e1e;">2</span>
<span class="t" style="left:16.2px;top:1015.51px;font-size:17px;color:#1e1e1e;letter-spacing:-0.374px;">Link thickness (cm):</span>
<span class="t" style="left:241.3px;top:1015.51px;font-size:17px;color:#1e1e1e;letter-spacing:-0.350px;transform:scaleX(0.9764);transform-origin:0 0;">0.5</span>
<span class="t" style="left:16.2px;top:1057.51px;font-size:17px;color:#1e1e1e;letter-spacing:-0.300px;">Peg/Hole radius (cm):</span>
<span class="t" style="left:241.3px;top:1057.51px;font-size:17px;color:#1e1e1e;letter-spacing:-0.350px;transform:scaleX(0.9764);transform-origin:0 0;">0.5</span>
<span class="t" style="left:16.2px;top:1099.51px;font-size:17px;color:#1e1e1e;letter-spacing:-0.348px;">Link color:</span>
<span class="t" style="left:241.3px;top:1099.51px;font-size:17px;color:#1e1e1e;letter-spacing:-0.125px;">[0.0 0.6 0.8]</span>
<span id="front">FRONT</span>
</div></body></html>
